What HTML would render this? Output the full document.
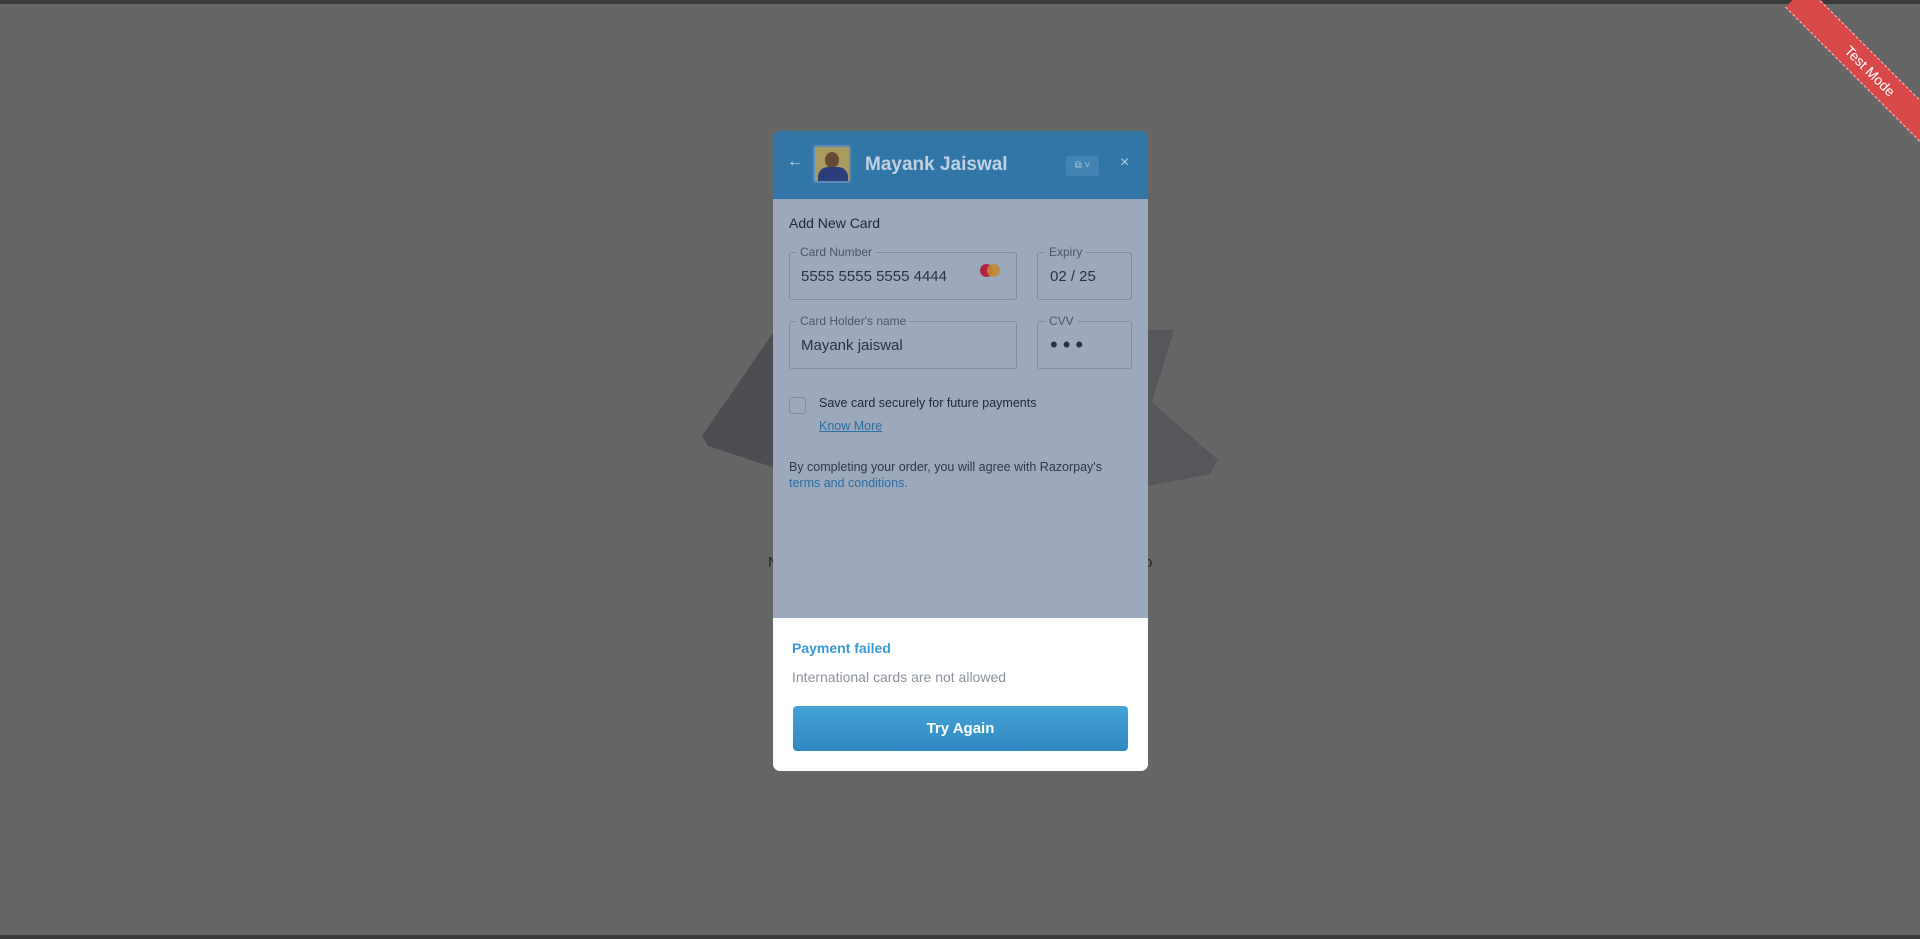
<!DOCTYPE html>
<html><head><meta charset="utf-8"><style>
*{box-sizing:border-box;margin:0;padding:0}
body{width:1920px;height:939px;background:#666;position:relative;overflow:hidden;font-family:"Liberation Sans",sans-serif}
.bar{position:absolute;left:0;right:0;height:4px;background:#3a3a3c}
.modal{position:absolute;left:773px;top:131px;width:375px;height:640px;border-radius:7px;overflow:hidden;background:#9ca9bd}
.hdr{height:68px;background:#3176a7;position:relative}
.abs{position:absolute}
.lbl{position:absolute;font-size:12px;color:#4c5568;background:#9ca9bd;padding:0 4px}
.box{position:absolute;border:1px solid #7f8ba0;border-radius:3px}
.val{position:absolute;font-size:15px;color:#2a3142}
.white{position:absolute;left:0;top:487px;width:375px;height:153px;background:#fff}
</style></head><body>
<div class="bar" style="top:0"></div>
<div class="bar" style="top:935px"></div>
<svg class="abs" style="left:0;top:0" width="1920" height="939">
<polygon points="775,330 702,436 708,446 775,468" fill="#4c4d52"/>
<polygon points="1148,330 1174,330 1152,402 1218,460 1210,474 1148,486" fill="#56575b"/>
</svg>
<div class="abs" style="left:768px;top:554px;font-size:15px;color:#222">N</div>
<div class="abs" style="left:1144px;top:554px;font-size:15px;color:#222">o</div>
<div class="abs" style="left:1765px;top:56px;width:210px;height:30px;background:#d94848;transform:rotate(45deg);transform-origin:center;border-top:1px dashed #f3c9c9;border-bottom:1px dashed #f3c9c9;color:#fff;font-size:14px;text-align:center;line-height:28px">Test Mode</div>
<div class="modal">
 <div class="hdr">
  <div class="abs" style="left:14px;top:22px;color:#c5d5e5;font-size:16px">←</div>
  <div class="abs" style="left:40px;top:14px;width:38px;height:38px;border:2px solid #5a8cb5;border-radius:3px;background:#a89a60;overflow:hidden">
    <div class="abs" style="left:10px;top:5px;width:14px;height:16px;border-radius:50%;background:#6a4a36"></div>
    <div class="abs" style="left:3px;top:20px;width:30px;height:20px;border-radius:10px 10px 0 0;background:#2a3f7a"></div>
  </div>
  <div class="abs" style="left:92px;top:23px;color:#c1d1e1;font-size:19px;font-weight:bold">Mayank Jaiswal</div>
  <div class="abs" style="left:293px;top:25px;width:33px;height:20px;background:#4383b2;border-radius:2px;color:#a9c0d6;font-size:10px;line-height:20px;text-align:center">⧉ ˅</div>
  <div class="abs" style="left:347px;top:23px;color:#b7cadb;font-size:16px">×</div>
 </div>
 <div class="abs" style="left:16px;top:84px;font-size:14px;color:#20283a">Add New Card</div>
 <div class="box" style="left:16px;top:121px;width:228px;height:48px"></div>
 <div class="lbl" style="left:23px;top:114px">Card Number</div>
 <div class="val" style="left:28px;top:137px">5555 5555 5555 4444</div>
 <div class="abs" style="left:207px;top:133px;width:13px;height:13px;border-radius:50%;background:#b0243f"></div>
 <div class="abs" style="left:214px;top:133px;width:13px;height:13px;border-radius:50%;background:#c08a35;opacity:.9"></div>
 <div class="box" style="left:264px;top:121px;width:95px;height:48px"></div>
 <div class="lbl" style="left:272px;top:114px">Expiry</div>
 <div class="val" style="left:277px;top:137px">02 / 25</div>
 <div class="box" style="left:16px;top:190px;width:228px;height:48px"></div>
 <div class="lbl" style="left:23px;top:183px">Card Holder's name</div>
 <div class="val" style="left:28px;top:206px">Mayank jaiswal</div>
 <div class="box" style="left:264px;top:190px;width:95px;height:48px"></div>
 <div class="lbl" style="left:272px;top:183px">CVV</div>
 <div class="val" style="left:277px;top:201px;letter-spacing:5px;font-size:22px">•••</div>
 <div class="box" style="left:16px;top:266px;width:17px;height:17px"></div>
 <div class="abs" style="left:46px;top:265px;font-size:12.5px;color:#20283a">Save card securely for future payments</div>
 <div class="abs" style="left:46px;top:288px;font-size:12.5px;color:#2a6f9f;text-decoration:underline">Know More</div>
 <div class="abs" style="left:16px;top:328px;font-size:12.5px;color:#2e3648;line-height:16px">By completing your order, you will agree with Razorpay's<br><span style="color:#2a6f9f">terms and conditions.</span></div>
 <div class="white">
  <div class="abs" style="left:19px;top:22px;font-size:14px;font-weight:bold;color:#3a9ad6">Payment failed</div>
  <div class="abs" style="left:19px;top:51px;font-size:14px;color:#8a919c">International cards are not allowed</div>
  <div class="abs" style="left:20px;top:88px;width:335px;height:45px;border-radius:4px;background:linear-gradient(#45a3d6,#2f89bf);color:#fff;font-size:15px;font-weight:bold;text-align:center;line-height:45px">Try Again</div>
 </div>
</div>
</body></html>
